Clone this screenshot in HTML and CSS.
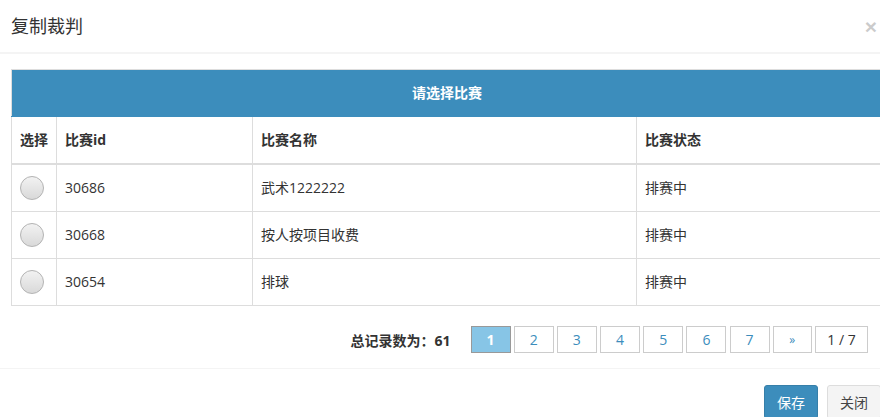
FILE: index.html
```html
<!DOCTYPE html>
<html lang="zh-CN">
  <head>
    <meta charset="UTF-8" />
    <meta name="viewport" content="width=device-width, initial-scale=1.0" />
    <title>复制裁判</title>
    <link rel="stylesheet" href="styles.css">
  </head>
  <body>
    <div class="modal-content">
      <div class="modal-header">
        <h4 class="modal-title">复制裁判</h4>
        <span class="close">&times;</span>
      </div>

      <div class="modal-body">
        <table class="match-table">
          <colgroup>
            <col class="col-pick" />
            <col class="col-id" />
            <col class="col-name" />
            <col class="col-state" />
          </colgroup>
          <thead>
            <tr>
              <th class="caption" colspan="4">请选择比赛</th>
            </tr>
            <tr>
              <th>选择</th>
              <th>比赛id</th>
              <th>比赛名称</th>
              <th>比赛状态</th>
            </tr>
          </thead>
          <tbody>
            <tr>
              <td class="pick"><input type="radio" name="match" value="30686" /></td>
              <td>30686</td>
              <td>武术1222222</td>
              <td>排赛中</td>
            </tr>
            <tr>
              <td class="pick"><input type="radio" name="match" value="30668" /></td>
              <td>30668</td>
              <td>按人按项目收费</td>
              <td>排赛中</td>
            </tr>
            <tr>
              <td class="pick"><input type="radio" name="match" value="30654" /></td>
              <td>30654</td>
              <td>排球</td>
              <td>排赛中</td>
            </tr>
          </tbody>
        </table>

        <div class="pager">
          <span class="total">总记录数为：61</span>
          <ul class="pages">
            <li class="active"><a href="#">1</a></li>
            <li><a href="#">2</a></li>
            <li><a href="#">3</a></li>
            <li><a href="#">4</a></li>
            <li><a href="#">5</a></li>
            <li><a href="#">6</a></li>
            <li><a href="#">7</a></li>
            <li class="next"><a href="#">&raquo;</a></li>
            <li class="count"><span>1 / 7</span></li>
          </ul>
        </div>
      </div>

      <div class="modal-footer">
        <button class="btn btn-primary">保存</button>
        <button class="btn btn-default">关闭</button>
      </div>
    </div>
  </body>
</html>
```

FILE: styles.css
```css
html,
body {
  overflow: hidden;
}

body {
  margin: 0;
  background: #fff;
  color: #333;
  font-family: "Open Sans", "Noto Sans CJK SC", sans-serif;
  font-size: 14px;
}

.modal-content {
  width: 894px;
}

.modal-header {
  display: flex;
  align-items: center;
  padding: 13px 15px 13px 11px;
  border-bottom: 2px solid #f4f4f4;
}

.modal-title {
  margin: 0;
  font-size: 18px;
  font-weight: normal;
  line-height: 26px;
}

.close {
  margin-left: auto;
  margin-right: 2px;
  font-family: "Liberation Sans", Arial, sans-serif;
  font-size: 21px;
  font-weight: bold;
  line-height: 1;
  color: #000;
  opacity: 0.2;
}

.modal-body {
  padding: 15px 11px 15px 11px;
}

.match-table {
  width: 872px;
  table-layout: fixed;
  border-collapse: collapse;
  border: 1px solid #ddd;
}

.col-pick {
  width: 45px;
}

.col-id {
  width: 196px;
}

.col-name {
  width: 384px;
}

.match-table th,
.match-table td {
  padding: 13px 8px;
  line-height: 20px;
  text-align: left;
  border: 1px solid #ddd;
}

.match-table th {
  font-weight: bold;
}

.match-table thead tr:last-child th {
  border-bottom-width: 2px;
}

.match-table .caption {
  background: #3c8dbc;
  color: #fff;
  text-align: center;
  border-bottom-color: #3c8dbc;
}

.match-table td.pick {
  padding: 11px 8px;
}

.pick input {
  display: block;
  appearance: none;
  -webkit-appearance: none;
  width: 24px;
  height: 24px;
  margin: 0;
  border: 1px solid #b4b4b4;
  border-radius: 50%;
  background: linear-gradient(#f2f2f2, #d9d9d9);
}

.pager {
  display: flex;
  justify-content: flex-end;
  align-items: center;
  margin: 20px 15px 0 0;
}

.total {
  font-weight: bold;
  margin-right: 20px;
}

.pages {
  display: flex;
  gap: 3.2px;
  margin: 0;
  padding: 0;
  list-style: none;
}

.pages a,
.pages span {
  display: block;
  width: 38px;
  line-height: 25px;
  text-align: center;
  border: 1px solid #ccc;
  color: #3c8dbc;
  text-decoration: none;
}

.pages .active a {
  background: #87c5e6;
  border-color: #999;
  color: #fff;
  font-weight: bold;
}

.pages .next a {
  width: 37px;
  font-size: 12px;
}

.pages .count span {
  width: 51px;
  color: #333;
}

.modal-footer {
  display: flex;
  justify-content: flex-end;
  gap: 9px;
  padding: 16px 13px 0 0;
  border-top: 1px solid #f4f4f4;
}

.btn {
  height: 34px;
  padding: 0 12px;
  font-family: inherit;
  font-size: 14px;
  border: 1px solid transparent;
  border-radius: 3px;
}

.btn-primary {
  background: #3c8dbc;
  border-color: #367fa9;
  color: #fff;
}

.btn-default {
  background: #f4f4f4;
  border-color: #ddd;
  color: #444;
}
```
